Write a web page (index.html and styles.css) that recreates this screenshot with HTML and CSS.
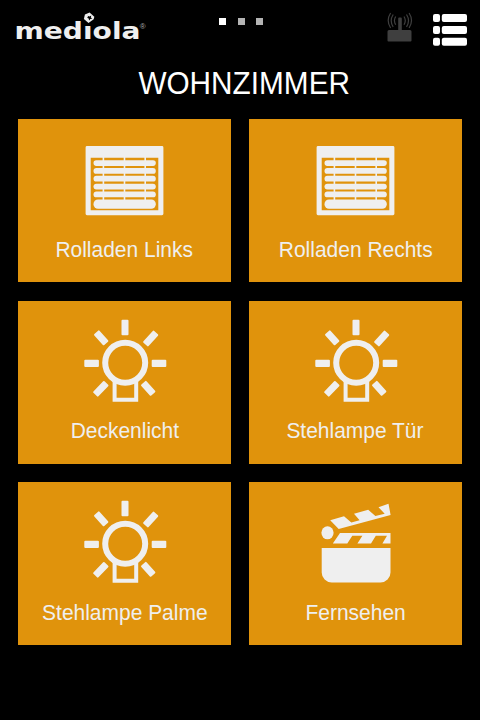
FILE: index.html
```
<!DOCTYPE html>
<html lang="de">
<head>
    <meta charset="UTF-8">
    <meta name="viewport" content="width=device-width, initial-scale=1.0">
    <title>mediola - Wohnzimmer</title>
    <link rel="stylesheet" href="styles.css">
</head>
<body>
    <!-- Shared tile icons -->
    <svg class="icon-defs" xmlns="http://www.w3.org/2000/svg">
        <symbol id="icon-blind" viewBox="0 0 84 84">
            <path fill-rule="evenodd" d="M4 9h75a1.4 1.4 0 0 1 1.4 1.4v66.4a1.4 1.4 0 0 1-1.4 1.4H4a1.4 1.4 0 0 1-1.4-1.4V10.4a1.4 1.4 0 0 1 1.400-1.400zM7.700 20.700v52.600h67.600V20.700z"/>
            <rect x="10.500" y="23.300" width="62.300" height="5.600" rx="2.800"/>
            <rect x="10.500" y="31" width="62.300" height="5.800" rx="2.900"/>
            <rect x="10.500" y="38.800" width="62.300" height="5.800" rx="2.900"/>
            <rect x="10.500" y="46.700" width="62.300" height="5.800" rx="2.900"/>
            <rect x="10.500" y="54.500" width="62.300" height="5.800" rx="2.900"/>
            <rect x="10.500" y="62.500" width="62.300" height="9.300" rx="4.500"/>
            <path d="M19.600 20h1.600v44h-1.600zM40.700 20h1.600v44h-1.600zM61.400 20h1.600v44h-1.600z"/>
        </symbol>
        <symbol id="icon-lamp" viewBox="0 0 84 84">
            <circle cx="42.200" cy="43.800" r="20" fill="none" stroke="#efefef" stroke-width="6"/>
            <path d="M31.600 61v19.700h21.600V61" fill="none" stroke="#efefef" stroke-width="4"/>
            <g>
                <rect x="38.500" y="0.700" width="7" height="15.600" rx="1"/>
                <rect x="1.300" y="40.700" width="14.600" height="7.400" rx="1"/>
                <rect x="68.700" y="40.700" width="14.600" height="7.400" rx="1"/>
                <rect x="-7.400" y="-3.500" width="14.800" height="7" rx="1" transform="translate(18.200 18.800) rotate(48)"/>
                <rect x="-8" y="-3.500" width="16" height="7" rx="1" transform="translate(67.700 19.500) rotate(-48)"/>
                <rect x="-8" y="-3.500" width="16" height="7" rx="1" transform="translate(17.800 69.800) rotate(-46)"/>
                <rect x="-7.400" y="-3.500" width="14.800" height="7" rx="1" transform="translate(65.200 69.300) rotate(48)"/>
            </g>
        </symbol>
        <symbol id="icon-clapper" viewBox="0 0 84 84">
            <ellipse cx="13.500" cy="32.800" rx="6.100" ry="6.500"/>
            <path d="M16.200 20.200l13.800-3.900 7.300 6.300 8.300-2.300-5.600-6.500 14.200-4.100 7.200 6.300 9.300-2.200-6.200-6.600 10-3.400 2.100 11.100-51.900 14z"/>
            <path d="M26 33h50.500v10.600H68.400l4.600-7.800h-11.200l-4.800 7.800H43.400l5-7.800H38.300l-5 7.800H18.800z"/>
            <path d="M7.700 48h68.800v24.500a10 10 0 0 1-10 10H17.700a10 10 0 0 1-10-10z"/>
        </symbol>
    </svg>

    <header class="topbar">
        <svg class="logo" width="136" height="32" viewBox="0 0 136 32">
            <text class="logo-text" x="-0.500" y="28.200" textLength="126" lengthAdjust="spacingAndGlyphs">mediola</text>
            <!-- the cube replaces the dot of the i -->
            <rect x="68" y="9" width="9.500" height="5.500" fill="#000"/>
            <path fill="#efefef" d="M74.600 1.500l4.700 4.200-.6 2.600-5.200 3.700-4.600-4.100 1-4.500z"/>
            <path fill="#000" d="M72.500 4.800l1.900.7 1.900-1-.5 2 1.500 1.100-1.900.3-1.300 1.600-.4-2-1.800-.7 1.300-.7z"/>
            <text class="logo-reg" x="124.800" y="17.500">®</text>
        </svg>
        <div class="pager">
            <span class="dot active"></span>
            <span class="dot"></span>
            <span class="dot"></span>
        </div>
        <div class="actions">
            <svg class="gateway" width="26" height="32" viewBox="0 0 26 32">
                <path fill="#3f3f3f" d="M11.200 6.500a1 1 0 0 1 1-1h1.600a1 1 0 0 1 1 1V18h8.200a1.500 1.500 0 0 1 1.500 1.500v9a1 1 0 0 1-1 1h-22a1 1 0 0 1-1-1v-9A1.500 1.500 0 0 1 2 18h9.200z"/>
                <path fill="none" stroke="#3f3f3f" stroke-width="1.200" d="M8.700 4.500q-2.600 4.100 0 8.200M6.200 2.500q-4 6.200 0 12.300M3.600 1q-4.800 7.500 0 15M17 4.500q2.600 4.100 0 8.200M19.500 2.500q4 6.200 0 12.300M22.100 1q4.800 7.500 0 15"/>
            </svg>
            <svg class="menu" width="34" height="32" viewBox="0 0 34 32" fill="#fff">
                <rect x="0" y="0" width="7" height="8" rx="2"/>
                <rect x="8.800" y="0" width="25.200" height="8" rx="2"/>
                <rect x="0" y="12" width="7" height="8" rx="2"/>
                <rect x="8.800" y="12" width="25.200" height="8" rx="2"/>
                <rect x="0" y="23.800" width="7" height="8" rx="2"/>
                <rect x="8.800" y="23.800" width="25.200" height="8" rx="2"/>
            </svg>
        </div>
    </header>

    <h1>WOHNZIMMER</h1>

    <main class="tiles">
        <div class="tile">
            <svg class="icon"><use href="#icon-blind"/></svg>
            <span class="label">Rolladen Links</span>
        </div>
        <div class="tile">
            <svg class="icon"><use href="#icon-blind"/></svg>
            <span class="label">Rolladen Rechts</span>
        </div>
        <div class="tile">
            <svg class="icon"><use href="#icon-lamp"/></svg>
            <span class="label">Deckenlicht</span>
        </div>
        <div class="tile">
            <svg class="icon"><use href="#icon-lamp"/></svg>
            <span class="label">Stehlampe Tür</span>
        </div>
        <div class="tile">
            <svg class="icon"><use href="#icon-lamp"/></svg>
            <span class="label">Stehlampe Palme</span>
        </div>
        <div class="tile">
            <svg class="icon"><use href="#icon-clapper"/></svg>
            <span class="label">Fernsehen</span>
        </div>
    </main>
</body>
</html>
```
FILE: styles.css
```
* {
    box-sizing: border-box;
}
body {
    margin: 0;
    width: 480px;
    height: 720px;
    background: #000;
    color: #fff;
    font-family: "Liberation Sans", Arial, sans-serif;
    overflow: hidden;
}
.icon-defs {
    display: none;
}
.topbar {
    display: grid;
    grid-template-columns: 1fr 44px 1fr;
    align-items: start;
    height: 60px;
    padding: 11px 13px 0 15px;
}
.logo {
    display: block;
}
.logo-text {
    font-family: "DejaVu Sans", sans-serif;
    font-weight: bold;
    font-size: 22.500px;
    fill: #efefef;
}
.logo-reg {
    font-size: 8px;
    fill: #aaa;
}
.pager {
    display: flex;
    justify-content: space-between;
    margin-top: 7px;
}
.dot {
    width: 7px;
    height: 7px;
    background: #b4b4b4;
}
.dot.active {
    background: #fff;
}
.actions {
    display: flex;
    justify-content: flex-end;
    gap: 20px;
}
.menu {
    margin-top: 3px;
}
.gateway {
    margin-top: 1px;
}
h1 {
    margin: 0;
    padding-left: 9px;
    height: 59px;
    line-height: 46px;
    font-size: 32px;
    font-weight: normal;
    text-align: center;
    transform: scaleX(0.93);
}
.tiles {
    display: grid;
    grid-template-columns: 213.5px 213.5px;
    grid-auto-rows: 163px;
    gap: 18.5px 17.5px;
    padding-left: 17.7px;
}
.tile {
    display: flex;
    flex-direction: column;
    align-items: center;
    padding-top: 18px;
    background: #e0930c;
}
.icon {
    width: 84px;
    height: 84px;
    margin-left: 1px;
    fill: #efefef;
}
.label {
    margin-top: 15.5px;
    line-height: 26px;
    font-size: 22px;
    color: #efefef;
    white-space: nowrap;
    transform: scaleX(0.953);
}
```
